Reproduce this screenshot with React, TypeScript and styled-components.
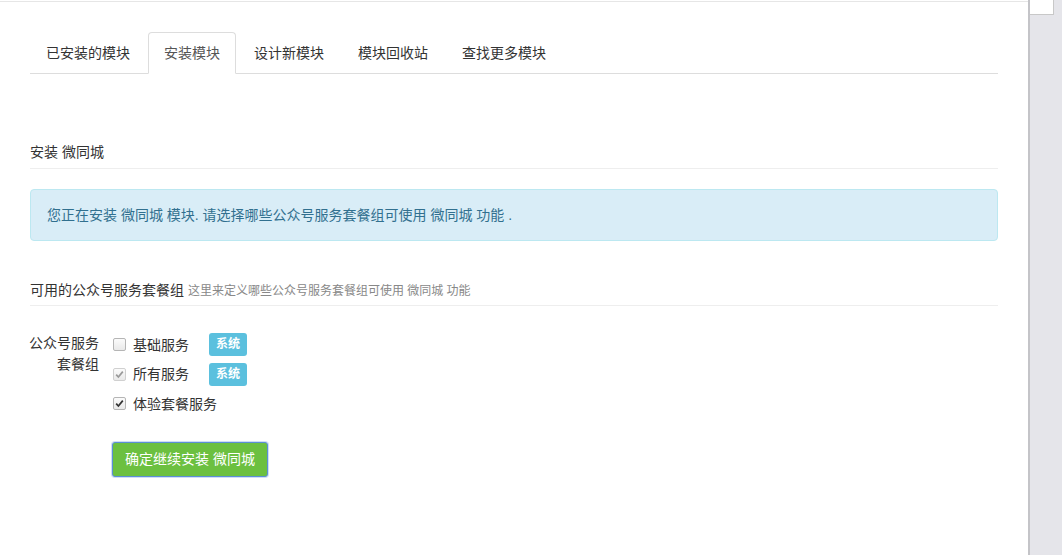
import React, {FC} from 'react'
import styled, {createGlobalStyle} from 'styled-components';

const GlobalStyle = createGlobalStyle`
  html, body {
    margin: 0;
    padding: 0;
    height: 100%;
    background: #fff;
  }
  body {
    font-family: "Liberation Sans", "Noto Sans CJK SC", sans-serif;
    font-size: 14px;
    color: #333;
  }
`;

const Page = styled.div`
  display: flex;
  width: 1062px;
  height: 555px;
  overflow: hidden;
`;

const Main = styled.div`
  flex: 1;
  margin-top: 1px;
  border-top: 1px solid #e6e6e6;
  padding: 30px 30px 0 30px;
`;

const Gutter = styled.div`
  width: 32px;
  background: #e5e5ea;
  border-left: 2px solid #c4c4c8;
`;

const GutterThumb = styled.div`
  width: 23px;
  height: 14px;
  background: #fff;
  border-right: 1px solid #c8c8c8;
  border-bottom: 1px solid #c8c8c8;
`;

const Tabs = styled.ul`
  display: flex;
  list-style: none;
  margin: 0;
  padding: 0;
  border-bottom: 1px solid #ddd;
`;

const Tab = styled.li<{ $active?: boolean }>`
  margin-right: 2px;
  margin-bottom: -1px;
  padding: 10px 15px;
  line-height: 20px;
  border: 1px solid ${p => p.$active ? '#ddd' : 'transparent'};
  border-bottom-color: ${p => p.$active ? '#fff' : 'transparent'};
  border-radius: 4px 4px 0 0;
  background: ${p => p.$active ? '#fff' : 'transparent'};
  color: ${p => p.$active ? '#555' : '#333'};
  cursor: pointer;
`;

const SectionHeader = styled.div<{ $top: number; $pad: number }>`
  margin-top: ${p => p.$top}px;
  height: 20px;
  padding-bottom: ${p => p.$pad}px;
  line-height: 20px;
  border-bottom: 1px solid #eee;
  color: #333;

  small {
    font-size: 12px;
    line-height: 20px;
    color: #888;
  }
`;

const Alert = styled.div`
  margin-top: 20px;
  padding: 15px 16px;
  line-height: 20px;
  background: #d9edf7;
  border: 1px solid #bce8f1;
  border-radius: 4px;
  color: #31708f;
`;

const FormGroup = styled.div`
  display: flex;
  margin-top: 24px;
`;

const FormLabel = styled.div`
  width: 71px;
  margin-left: -2px;
  margin-right: 14px;
  padding-top: 3px;
  line-height: 21px;
  text-align: right;
  color: #333;
`;

const Options = styled.div`
  display: flex;
  flex-direction: column;
`;

const OptionRow = styled.label`
  display: flex;
  align-items: center;
  height: 29.5px;
  line-height: 20px;
  white-space: nowrap;
`;

const Box = styled.span<{ $disabled?: boolean }>`
  display: inline-flex;
  align-items: center;
  justify-content: center;
  box-sizing: border-box;
  width: 13px;
  height: 13px;
  margin-right: 7px;
  border: 1px solid ${p => p.$disabled ? '#d0d0d0' : '#b5b5b5'};
  border-radius: 2px;
  background: linear-gradient(#fbfbfb, #e9e9e9);
`;

const OptionText = styled.span`
  min-width: 76px;
`;

const Badge = styled.span`
  display: inline-block;
  padding: 0 7px;
  height: 23px;
  line-height: 23px;
  font-size: 12px;
  font-weight: bold;
  color: #fff;
  background: #5bc0de;
  border-radius: 3px;
`;

const SubmitButton = styled.button`
  margin-top: 23px;
  margin-left: 82px;
  padding: 6px 12px;
  line-height: 21px;
  font-family: inherit;
  font-size: 14px;
  color: #fff;
  background: #6cc040;
  border: 1px solid #5b8fd6;
  border-radius: 3px;
  box-shadow: 0 0 0 1px rgba(120, 160, 230, 0.35);
  cursor: pointer;
`;

const Check: FC<{ color: string }> = ({color}) => (
    <svg width="9" height="9" viewBox="0 0 9 9">
        <path d="M1.2 4.6 L3.4 7 L7.8 1.6" fill="none" stroke={color} strokeWidth="1.7"/>
    </svg>
);

interface Option {
    name: string;
    checked: boolean;
    disabled?: boolean;
    system?: boolean;
}

const OPTIONS: Option[] = [
    {name: '基础服务', checked: false, system: true},
    {name: '所有服务', checked: true, disabled: true, system: true},
    {name: '体验套餐服务', checked: true},
];

const TABS = ['已安装的模块', '安装模块', '设计新模块', '模块回收站', '查找更多模块'];

const App: FC = () => {
    const moduleName = '微同城';

    return (
        <Page>
            <GlobalStyle/>
            <Main>
                <Tabs>
                    {TABS.map(t => (
                        <Tab key={t} $active={t === '安装模块'}>{t}</Tab>
                    ))}
                </Tabs>

                <SectionHeader $top={68} $pad={6}>安装 {moduleName}</SectionHeader>

                <Alert>
                    您正在安装 {moduleName} 模块. 请选择哪些公众号服务套餐组可使用 {moduleName} 功能 .
                </Alert>

                <SectionHeader $top={39} $pad={5}>
                    可用的公众号服务套餐组 <small>这里来定义哪些公众号服务套餐组可使用 {moduleName} 功能</small>
                </SectionHeader>

                <FormGroup>
                    <FormLabel>公众号服务套餐组</FormLabel>
                    <Options>
                        {OPTIONS.map(o => (
                            <OptionRow key={o.name}>
                                <Box $disabled={o.disabled}>
                                    {o.checked && <Check color={o.disabled ? '#9a9a9a' : '#333'}/>}
                                </Box>
                                <OptionText>{o.name}</OptionText>
                                {o.system && <Badge>系统</Badge>}
                            </OptionRow>
                        ))}
                    </Options>
                </FormGroup>

                <SubmitButton>确定继续安装 {moduleName}</SubmitButton>
            </Main>
            <Gutter>
                <GutterThumb/>
            </Gutter>
        </Page>
    );
};

export default App;
